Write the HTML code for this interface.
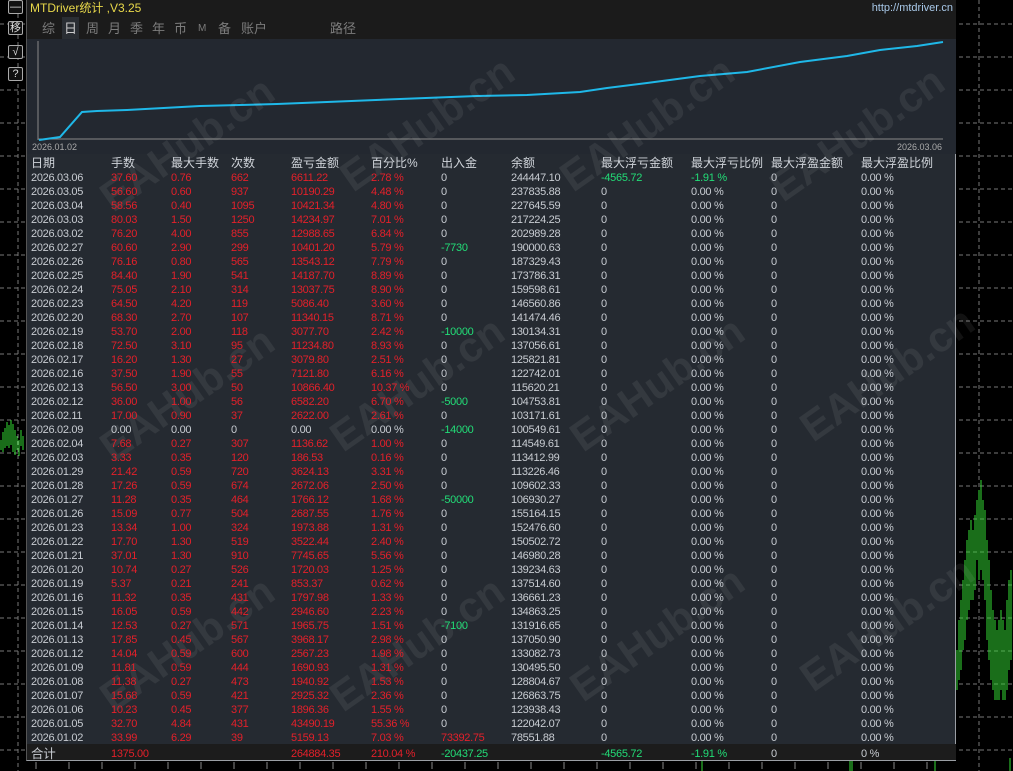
<!DOCTYPE html>
<html><head><meta charset="utf-8"><style>
*{margin:0;padding:0;box-sizing:border-box}
body{width:1013px;height:771px;background:#000;position:relative;overflow:hidden;font-family:"Liberation Sans","Noto Sans CJK SC",sans-serif}
#bg{position:absolute;left:0;top:0}
.btn{position:absolute;left:8px;width:15px;height:14px;border:1px solid #aaa;border-radius:2px;color:#ddd;font-size:11px;line-height:12px;text-align:center;background:#111}
#panel{position:absolute;left:26px;top:0;width:930px;height:761px;background:#252a31;border-right:1px solid #9a9ea4;border-bottom:1px solid #9a9ea4;border-left:1px solid #555}
#title{position:absolute;left:0;top:0;width:929px;height:17px;background:#1b1b1b;color:#e8d84a;font-size:12px;line-height:16px;padding-left:3px}
#url{position:absolute;right:3px;top:0;color:#a8c8e8;font-size:11px;line-height:16px}
#tabs{position:absolute;left:0;top:17px;width:929px;height:22px;background:#1b1b1b;color:#7c7c7c;font-size:13px;line-height:24px}
#tabs span{position:absolute;top:0}
#chart{position:absolute;left:0;top:39px;width:929px;height:115px}
table{position:absolute;left:4px;top:155px;border-collapse:collapse;font-size:11px;letter-spacing:-0.3px;color:#c8ccd2}
td{height:14px;line-height:14px;padding:0;white-space:nowrap;vertical-align:middle}
tr.h td{font-size:12px;letter-spacing:0;color:#d0d4da;height:16px}
.r{color:#e4202a}.g{color:#22dd77}
#tot{position:absolute;left:0;top:744px;width:929px;height:16px;background:#1c1c1c}
.wm{position:absolute;color:rgba(255,255,255,0.07);font-size:42px;font-weight:bold;transform:rotate(-35deg);white-space:nowrap}
</style></head><body>
<svg id="bg" width="1013" height="771" shape-rendering="crispEdges">
<g stroke="#777" stroke-dasharray="4,3" stroke-width="1">
<line x1="0" y1="24" x2="1013" y2="24"/><line x1="0" y1="57" x2="1013" y2="57"/><line x1="0" y1="90" x2="1013" y2="90"/><line x1="0" y1="123" x2="1013" y2="123"/><line x1="0" y1="156" x2="1013" y2="156"/><line x1="0" y1="189" x2="1013" y2="189"/><line x1="0" y1="222" x2="1013" y2="222"/><line x1="0" y1="255" x2="1013" y2="255"/><line x1="0" y1="288" x2="1013" y2="288"/><line x1="0" y1="321" x2="1013" y2="321"/><line x1="0" y1="354" x2="1013" y2="354"/><line x1="0" y1="387" x2="1013" y2="387"/><line x1="0" y1="420" x2="1013" y2="420"/><line x1="0" y1="453" x2="1013" y2="453"/><line x1="0" y1="486" x2="1013" y2="486"/><line x1="0" y1="519" x2="1013" y2="519"/><line x1="0" y1="552" x2="1013" y2="552"/><line x1="0" y1="585" x2="1013" y2="585"/><line x1="0" y1="618" x2="1013" y2="618"/><line x1="0" y1="651" x2="1013" y2="651"/><line x1="0" y1="684" x2="1013" y2="684"/><line x1="0" y1="717" x2="1013" y2="717"/><line x1="0" y1="750" x2="1013" y2="750"/>
<line x1="18" y1="0" x2="18" y2="771"/><line x1="979" y1="0" x2="979" y2="771"/>
</g>
<g stroke="#33dd33" stroke-width="1">
<path d="M1 440V450M3 432V452M5 428V448M7 422V446M9 425V448M11 420V445M13 424V452M15 430V455M17 436V450M19 440V456M21 430V446M23 436V450"/>
<path d="M957 650V690M959 620V680M961 600V670M963 580V650M965 560V640M967 540V620M969 530V610M971 520V600M973 530V600M975 515V590M977 500V560M979 490V580M981 480V570M983 500V580M985 510V600M987 540V640M989 560V660M991 590V680M993 610V690M995 620V700M997 630V700M999 620V700M1001 610V690M1003 620V700M1005 630V700M1007 600V690M1009 580V670M1011 570V660"/>
<path d="M702 760V771M850 758V771M852 760V771M935 760V771M1010 758V771"/>
</g>
<g stroke="#888"><path d="M36 762V769M69 762V769M102 762V769M135 762V769M168 762V769M201 762V769M234 762V769M267 762V769M300 762V769M333 762V769M366 762V769M399 762V769M432 762V769M465 762V769M498 762V769M531 762V769M564 762V769M597 762V769M630 762V769M663 762V769M696 762V769M729 762V769M762 762V769M795 762V769M828 762V769M861 762V769M894 762V769M927 762V769"/></g>
</svg>
<div class="btn" style="top:0">—</div>
<div class="btn" style="top:21px">移</div>
<div class="btn" style="top:45px">√</div>
<div class="btn" style="top:67px">?</div>
<div id="panel">
<div id="title">MTDriver统计 ,V3.25<span id="url">http://mtdriver.cn</span></div>
<div id="tabs"><span style="left:15px">综</span><span style="left:35px;color:#ccc;background:#2a2e33;padding:0 2px">日</span><span style="left:59px">周</span><span style="left:81px">月</span><span style="left:103px">季</span><span style="left:125px">年</span><span style="left:147px">币</span><span style="left:171px;font-size:10px">M</span><span style="left:191px">备</span><span style="left:214px">账户</span><span style="left:303px">路径</span></div>
<svg id="chart" width="929" height="115">
<rect width="929" height="115" fill="#232830"/>
<line x1="11" y1="2" x2="11" y2="101" stroke="#888"/>
<line x1="11" y1="100" x2="916" y2="100" stroke="#888"/>
<polyline fill="none" stroke="#1fb8e8" stroke-width="2" points="12,101 33,98 55,73 70,72 100,71 173,67 250,65 300,63 373,60 450,57 500,56 553,53 580,49 620,44 673,37 720,33 773,23 820,17 853,11 890,7 916,3"/>
<text x="5" y="111" fill="#aaa" font-size="9">2026.01.02</text>
<text x="870" y="111" fill="#aaa" font-size="9">2026.03.06</text>
</svg>
<div id="tot"></div>
<div class="wm" style="left:60px;top:120px">EAHub.cn</div>
<div class="wm" style="left:300px;top:100px">EAHub.cn</div>
<div class="wm" style="left:520px;top:100px">EAHub.cn</div>
<div class="wm" style="left:730px;top:110px">EAHub.cn</div>
<div class="wm" style="left:60px;top:370px">EAHub.cn</div>
<div class="wm" style="left:290px;top:360px">EAHub.cn</div>
<div class="wm" style="left:530px;top:360px">EAHub.cn</div>
<div class="wm" style="left:760px;top:350px">EAHub.cn</div>
<div class="wm" style="left:60px;top:620px">EAHub.cn</div>
<div class="wm" style="left:290px;top:620px">EAHub.cn</div>
<div class="wm" style="left:530px;top:610px">EAHub.cn</div>
<div class="wm" style="left:760px;top:600px">EAHub.cn</div>
<table>
<colgroup><col style="width:80px"><col style="width:60px"><col style="width:60px"><col style="width:60px"><col style="width:80px"><col style="width:70px"><col style="width:70px"><col style="width:90px"><col style="width:90px"><col style="width:80px"><col style="width:90px"><col style="width:90px"></colgroup>
<tr class="h"><td>日期</td><td>手数</td><td>最大手数</td><td>次数</td><td>盈亏金额</td><td>百分比%</td><td>出入金</td><td>余额</td><td>最大浮亏金额</td><td>最大浮亏比例</td><td>最大浮盈金额</td><td>最大浮盈比例</td></tr>
<tr><td>2026.03.06</td><td class="r">37.60</td><td class="r">0.76</td><td class="r">662</td><td class="r">6611.22</td><td class="r">2.78 %</td><td>0</td><td>244447.10</td><td class="g">-4565.72</td><td class="g">-1.91 %</td><td>0</td><td>0.00 %</td></tr>
<tr><td>2026.03.05</td><td class="r">56.60</td><td class="r">0.60</td><td class="r">937</td><td class="r">10190.29</td><td class="r">4.48 %</td><td>0</td><td>237835.88</td><td>0</td><td>0.00 %</td><td>0</td><td>0.00 %</td></tr>
<tr><td>2026.03.04</td><td class="r">58.56</td><td class="r">0.40</td><td class="r">1095</td><td class="r">10421.34</td><td class="r">4.80 %</td><td>0</td><td>227645.59</td><td>0</td><td>0.00 %</td><td>0</td><td>0.00 %</td></tr>
<tr><td>2026.03.03</td><td class="r">80.03</td><td class="r">1.50</td><td class="r">1250</td><td class="r">14234.97</td><td class="r">7.01 %</td><td>0</td><td>217224.25</td><td>0</td><td>0.00 %</td><td>0</td><td>0.00 %</td></tr>
<tr><td>2026.03.02</td><td class="r">76.20</td><td class="r">4.00</td><td class="r">855</td><td class="r">12988.65</td><td class="r">6.84 %</td><td>0</td><td>202989.28</td><td>0</td><td>0.00 %</td><td>0</td><td>0.00 %</td></tr>
<tr><td>2026.02.27</td><td class="r">60.60</td><td class="r">2.90</td><td class="r">299</td><td class="r">10401.20</td><td class="r">5.79 %</td><td class="g">-7730</td><td>190000.63</td><td>0</td><td>0.00 %</td><td>0</td><td>0.00 %</td></tr>
<tr><td>2026.02.26</td><td class="r">76.16</td><td class="r">0.80</td><td class="r">565</td><td class="r">13543.12</td><td class="r">7.79 %</td><td>0</td><td>187329.43</td><td>0</td><td>0.00 %</td><td>0</td><td>0.00 %</td></tr>
<tr><td>2026.02.25</td><td class="r">84.40</td><td class="r">1.90</td><td class="r">541</td><td class="r">14187.70</td><td class="r">8.89 %</td><td>0</td><td>173786.31</td><td>0</td><td>0.00 %</td><td>0</td><td>0.00 %</td></tr>
<tr><td>2026.02.24</td><td class="r">75.05</td><td class="r">2.10</td><td class="r">314</td><td class="r">13037.75</td><td class="r">8.90 %</td><td>0</td><td>159598.61</td><td>0</td><td>0.00 %</td><td>0</td><td>0.00 %</td></tr>
<tr><td>2026.02.23</td><td class="r">64.50</td><td class="r">4.20</td><td class="r">119</td><td class="r">5086.40</td><td class="r">3.60 %</td><td>0</td><td>146560.86</td><td>0</td><td>0.00 %</td><td>0</td><td>0.00 %</td></tr>
<tr><td>2026.02.20</td><td class="r">68.30</td><td class="r">2.70</td><td class="r">107</td><td class="r">11340.15</td><td class="r">8.71 %</td><td>0</td><td>141474.46</td><td>0</td><td>0.00 %</td><td>0</td><td>0.00 %</td></tr>
<tr><td>2026.02.19</td><td class="r">53.70</td><td class="r">2.00</td><td class="r">118</td><td class="r">3077.70</td><td class="r">2.42 %</td><td class="g">-10000</td><td>130134.31</td><td>0</td><td>0.00 %</td><td>0</td><td>0.00 %</td></tr>
<tr><td>2026.02.18</td><td class="r">72.50</td><td class="r">3.10</td><td class="r">95</td><td class="r">11234.80</td><td class="r">8.93 %</td><td>0</td><td>137056.61</td><td>0</td><td>0.00 %</td><td>0</td><td>0.00 %</td></tr>
<tr><td>2026.02.17</td><td class="r">16.20</td><td class="r">1.30</td><td class="r">27</td><td class="r">3079.80</td><td class="r">2.51 %</td><td>0</td><td>125821.81</td><td>0</td><td>0.00 %</td><td>0</td><td>0.00 %</td></tr>
<tr><td>2026.02.16</td><td class="r">37.50</td><td class="r">1.90</td><td class="r">55</td><td class="r">7121.80</td><td class="r">6.16 %</td><td>0</td><td>122742.01</td><td>0</td><td>0.00 %</td><td>0</td><td>0.00 %</td></tr>
<tr><td>2026.02.13</td><td class="r">56.50</td><td class="r">3.00</td><td class="r">50</td><td class="r">10866.40</td><td class="r">10.37 %</td><td>0</td><td>115620.21</td><td>0</td><td>0.00 %</td><td>0</td><td>0.00 %</td></tr>
<tr><td>2026.02.12</td><td class="r">36.00</td><td class="r">1.00</td><td class="r">56</td><td class="r">6582.20</td><td class="r">6.70 %</td><td class="g">-5000</td><td>104753.81</td><td>0</td><td>0.00 %</td><td>0</td><td>0.00 %</td></tr>
<tr><td>2026.02.11</td><td class="r">17.00</td><td class="r">0.90</td><td class="r">37</td><td class="r">2622.00</td><td class="r">2.61 %</td><td>0</td><td>103171.61</td><td>0</td><td>0.00 %</td><td>0</td><td>0.00 %</td></tr>
<tr><td>2026.02.09</td><td>0.00</td><td>0.00</td><td>0</td><td>0.00</td><td>0.00 %</td><td class="g">-14000</td><td>100549.61</td><td>0</td><td>0.00 %</td><td>0</td><td>0.00 %</td></tr>
<tr><td>2026.02.04</td><td class="r">7.68</td><td class="r">0.27</td><td class="r">307</td><td class="r">1136.62</td><td class="r">1.00 %</td><td>0</td><td>114549.61</td><td>0</td><td>0.00 %</td><td>0</td><td>0.00 %</td></tr>
<tr><td>2026.02.03</td><td class="r">3.33</td><td class="r">0.35</td><td class="r">120</td><td class="r">186.53</td><td class="r">0.16 %</td><td>0</td><td>113412.99</td><td>0</td><td>0.00 %</td><td>0</td><td>0.00 %</td></tr>
<tr><td>2026.01.29</td><td class="r">21.42</td><td class="r">0.59</td><td class="r">720</td><td class="r">3624.13</td><td class="r">3.31 %</td><td>0</td><td>113226.46</td><td>0</td><td>0.00 %</td><td>0</td><td>0.00 %</td></tr>
<tr><td>2026.01.28</td><td class="r">17.26</td><td class="r">0.59</td><td class="r">674</td><td class="r">2672.06</td><td class="r">2.50 %</td><td>0</td><td>109602.33</td><td>0</td><td>0.00 %</td><td>0</td><td>0.00 %</td></tr>
<tr><td>2026.01.27</td><td class="r">11.28</td><td class="r">0.35</td><td class="r">464</td><td class="r">1766.12</td><td class="r">1.68 %</td><td class="g">-50000</td><td>106930.27</td><td>0</td><td>0.00 %</td><td>0</td><td>0.00 %</td></tr>
<tr><td>2026.01.26</td><td class="r">15.09</td><td class="r">0.77</td><td class="r">504</td><td class="r">2687.55</td><td class="r">1.76 %</td><td>0</td><td>155164.15</td><td>0</td><td>0.00 %</td><td>0</td><td>0.00 %</td></tr>
<tr><td>2026.01.23</td><td class="r">13.34</td><td class="r">1.00</td><td class="r">324</td><td class="r">1973.88</td><td class="r">1.31 %</td><td>0</td><td>152476.60</td><td>0</td><td>0.00 %</td><td>0</td><td>0.00 %</td></tr>
<tr><td>2026.01.22</td><td class="r">17.70</td><td class="r">1.30</td><td class="r">519</td><td class="r">3522.44</td><td class="r">2.40 %</td><td>0</td><td>150502.72</td><td>0</td><td>0.00 %</td><td>0</td><td>0.00 %</td></tr>
<tr><td>2026.01.21</td><td class="r">37.01</td><td class="r">1.30</td><td class="r">910</td><td class="r">7745.65</td><td class="r">5.56 %</td><td>0</td><td>146980.28</td><td>0</td><td>0.00 %</td><td>0</td><td>0.00 %</td></tr>
<tr><td>2026.01.20</td><td class="r">10.74</td><td class="r">0.27</td><td class="r">526</td><td class="r">1720.03</td><td class="r">1.25 %</td><td>0</td><td>139234.63</td><td>0</td><td>0.00 %</td><td>0</td><td>0.00 %</td></tr>
<tr><td>2026.01.19</td><td class="r">5.37</td><td class="r">0.21</td><td class="r">241</td><td class="r">853.37</td><td class="r">0.62 %</td><td>0</td><td>137514.60</td><td>0</td><td>0.00 %</td><td>0</td><td>0.00 %</td></tr>
<tr><td>2026.01.16</td><td class="r">11.32</td><td class="r">0.35</td><td class="r">431</td><td class="r">1797.98</td><td class="r">1.33 %</td><td>0</td><td>136661.23</td><td>0</td><td>0.00 %</td><td>0</td><td>0.00 %</td></tr>
<tr><td>2026.01.15</td><td class="r">16.05</td><td class="r">0.59</td><td class="r">442</td><td class="r">2946.60</td><td class="r">2.23 %</td><td>0</td><td>134863.25</td><td>0</td><td>0.00 %</td><td>0</td><td>0.00 %</td></tr>
<tr><td>2026.01.14</td><td class="r">12.53</td><td class="r">0.27</td><td class="r">571</td><td class="r">1965.75</td><td class="r">1.51 %</td><td class="g">-7100</td><td>131916.65</td><td>0</td><td>0.00 %</td><td>0</td><td>0.00 %</td></tr>
<tr><td>2026.01.13</td><td class="r">17.85</td><td class="r">0.45</td><td class="r">567</td><td class="r">3968.17</td><td class="r">2.98 %</td><td>0</td><td>137050.90</td><td>0</td><td>0.00 %</td><td>0</td><td>0.00 %</td></tr>
<tr><td>2026.01.12</td><td class="r">14.04</td><td class="r">0.59</td><td class="r">600</td><td class="r">2567.23</td><td class="r">1.98 %</td><td>0</td><td>133082.73</td><td>0</td><td>0.00 %</td><td>0</td><td>0.00 %</td></tr>
<tr><td>2026.01.09</td><td class="r">11.81</td><td class="r">0.59</td><td class="r">444</td><td class="r">1690.93</td><td class="r">1.31 %</td><td>0</td><td>130495.50</td><td>0</td><td>0.00 %</td><td>0</td><td>0.00 %</td></tr>
<tr><td>2026.01.08</td><td class="r">11.38</td><td class="r">0.27</td><td class="r">473</td><td class="r">1940.92</td><td class="r">1.53 %</td><td>0</td><td>128804.67</td><td>0</td><td>0.00 %</td><td>0</td><td>0.00 %</td></tr>
<tr><td>2026.01.07</td><td class="r">15.68</td><td class="r">0.59</td><td class="r">421</td><td class="r">2925.32</td><td class="r">2.36 %</td><td>0</td><td>126863.75</td><td>0</td><td>0.00 %</td><td>0</td><td>0.00 %</td></tr>
<tr><td>2026.01.06</td><td class="r">10.23</td><td class="r">0.45</td><td class="r">377</td><td class="r">1896.36</td><td class="r">1.55 %</td><td>0</td><td>123938.43</td><td>0</td><td>0.00 %</td><td>0</td><td>0.00 %</td></tr>
<tr><td>2026.01.05</td><td class="r">32.70</td><td class="r">4.84</td><td class="r">431</td><td class="r">43490.19</td><td class="r">55.36 %</td><td>0</td><td>122042.07</td><td>0</td><td>0.00 %</td><td>0</td><td>0.00 %</td></tr>
<tr><td>2026.01.02</td><td class="r">33.99</td><td class="r">6.29</td><td class="r">39</td><td class="r">5159.13</td><td class="r">7.03 %</td><td class="r">73392.75</td><td>78551.88</td><td>0</td><td>0.00 %</td><td>0</td><td>0.00 %</td></tr>
<tr style="height:16px"><td style="font-size:12.5px;height:17px">合计</td><td class="r">1375.00</td><td></td><td></td><td class="r">264884.35</td><td class="r">210.04 %</td><td class="g">-20437.25</td><td></td><td class="g">-4565.72</td><td class="g">-1.91 %</td><td>0</td><td>0 %</td></tr>
</table>
</div>
</body></html>
